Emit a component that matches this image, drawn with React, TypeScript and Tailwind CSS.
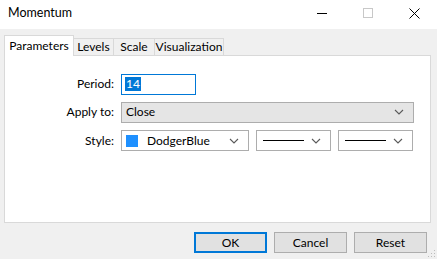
import React from "react";

const Chevron = () => (
  <svg width="10" height="6" viewBox="0 0 10 6" className="shrink-0">
    <path d="M1 1 L5 5 L9 1" fill="none" stroke="#5a5a5a" strokeWidth="1.1" />
  </svg>
);

const LineCombo = () => (
  <div className="w-[75px] h-[21px] border border-[#adadad] bg-white flex items-center pl-[6px] pr-[9px] gap-[7px]">
    <div className="flex-1 h-[1px] bg-black" />
    <Chevron />
  </div>
);

export default function App() {
  return (
    <div
      className="w-[437px] h-[259px] bg-[#f0f0f0] relative overflow-hidden text-[12px] text-black"
      style={{ fontFamily: 'Lato, "Noto Sans", sans-serif' }}
    >
      {/* Title bar */}
      <div className="h-[29px] bg-white flex items-center">
        <div className="pl-[8px] flex-1 text-[12.5px] leading-none pb-[3px]">Momentum</div>
        <div className="w-[46px] h-[29px] flex items-center justify-center pb-[3px]">
          <div className="w-[10px] h-[1px] bg-black" />
        </div>
        <div className="w-[46px] h-[29px] flex items-center justify-center pb-[3px]">
          <div className="w-[10px] h-[10px] border border-[#c8c8c8]" />
        </div>
        <div className="w-[46px] h-[29px] flex items-center justify-center pb-[3px]">
          <svg width="11" height="11" viewBox="0 0 11 11">
            <path d="M0.5 0.5 L10.5 10.5 M10.5 0.5 L0.5 10.5" stroke="#000" strokeWidth="1" />
          </svg>
        </div>
      </div>

      {/* Tabs */}
      <div className="pl-[4px] pr-[6px] pt-[6px]">
        <div className="flex items-end h-[20px] relative z-10">
          <div className="w-[70px] h-[21px] bg-white border border-b-0 border-[#d9d9d9] flex items-center justify-center mb-[-1px]">
            Parameters
          </div>
          <div className="w-[40px] h-[17px] bg-[#f0f0f0] border border-l-0 border-b-0 border-[#d9d9d9] flex items-center justify-center">
            Levels
          </div>
          <div className="w-[41px] h-[17px] bg-[#f0f0f0] border border-l-0 border-b-0 border-[#d9d9d9] flex items-center justify-center">
            Scale
          </div>
          <div className="w-[69px] h-[17px] bg-[#f0f0f0] border border-l-0 border-b-0 border-[#d9d9d9] flex items-center justify-center">
            Visualization
          </div>
        </div>
        {/* Panel */}
        <div className="h-[168px] bg-white border border-[#d9d9d9] pt-[18px] flex flex-col gap-[8px]">
          <div className="flex items-center h-[20px]">
            <div className="w-[109px] text-right">Period:</div>
            <div className="ml-[7px] w-[75px] h-[21px] border border-[#0078d7] flex items-center pl-[3px]">
              <span className="bg-[#0078d7] text-white leading-[14px] px-[1px]">14</span>
            </div>
          </div>
          <div className="flex items-center h-[20px]">
            <div className="w-[109px] text-right">Apply to:</div>
            <div className="ml-[7px] w-[293px] h-[21px] border border-[#adadad] bg-[#e5e5e5] flex items-center pl-[4px] pr-[9px]">
              <span className="flex-1">Close</span>
              <Chevron />
            </div>
          </div>
          <div className="flex items-center h-[21px]">
            <div className="w-[109px] text-right">Style:</div>
            <div className="ml-[7px] w-[128px] h-[21px] border border-[#adadad] bg-white flex items-center pl-[4px] pr-[9px]">
              <div className="w-[12px] h-[12px] bg-[#1e90ff] border border-[#1e90ff]" />
              <span className="flex-1 ml-[9px]">DodgerBlue</span>
              <Chevron />
            </div>
            <div className="ml-[7px]">
              <LineCombo />
            </div>
            <div className="ml-[7px]">
              <LineCombo />
            </div>
          </div>
        </div>
      </div>

      {/* Buttons */}
      <div className="flex justify-end gap-[7px] pr-[10px] mt-[9px]">
        <div className="w-[73px] h-[21px] border-2 border-[#0078d7] bg-[#e1e1e1] flex items-center justify-center">
          OK
        </div>
        <div className="w-[73px] h-[21px] border border-[#adadad] bg-[#e1e1e1] flex items-center justify-center">
          Cancel
        </div>
        <div className="w-[73px] h-[21px] border border-[#adadad] bg-[#e1e1e1] flex items-center justify-center">
          Reset
        </div>
      </div>

      {/* Resize grip */}
      <svg className="absolute right-[1px] bottom-[1px]" width="8" height="8" viewBox="0 0 8 8">
        <rect x="6" y="0" width="1" height="1" fill="#bcbcbc" />
        <rect x="3" y="3" width="1" height="1" fill="#bcbcbc" />
        <rect x="6" y="3" width="1" height="1" fill="#bcbcbc" />
        <rect x="0" y="6" width="1" height="1" fill="#bcbcbc" />
        <rect x="3" y="6" width="1" height="1" fill="#bcbcbc" />
        <rect x="6" y="6" width="1" height="1" fill="#bcbcbc" />
      </svg>
    </div>
  );
}
